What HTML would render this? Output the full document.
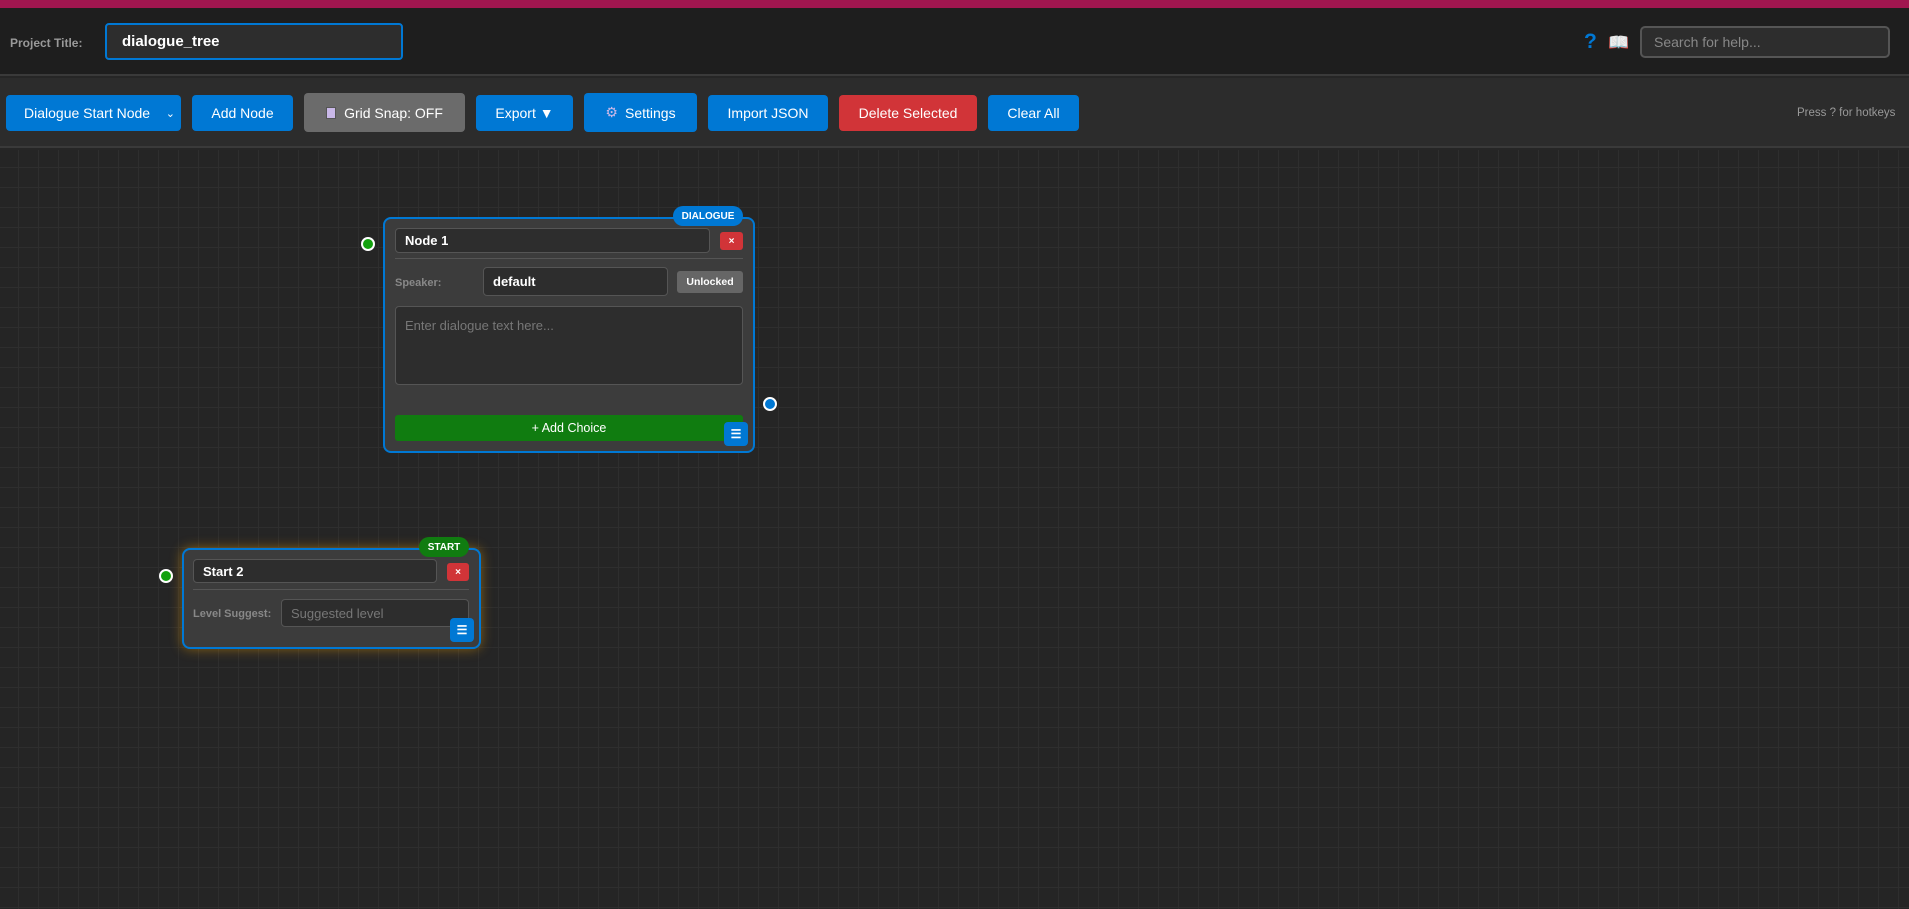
<!DOCTYPE html>
<html><head><meta charset="utf-8"><style>
*{box-sizing:border-box;margin:0;padding:0}
body{width:1909px;height:909px;overflow:hidden;background:#262626;font-family:"Liberation Sans",Arial,sans-serif;position:relative}
.a{position:absolute}
#pink{left:0;top:0;width:1909px;height:8px;background:#a0164f}
#hdr{left:0;top:8px;width:1909px;height:68px;background:#1e1e1e;border-bottom:2px solid #3a3a3a}
#tb{left:0;top:78px;width:1909px;height:70px;background:#2c2c2c;border-bottom:2px solid #3a3a3a}
#canvas{left:0;top:150px;width:1909px;height:759px;background-color:#252525;background-image:linear-gradient(#2e2e2e 1px,transparent 1px),linear-gradient(90deg,#2e2e2e 1px,transparent 1px);background-size:20px 20px;background-position:-2px -3px}
.btn{position:absolute;top:95px;height:36px;background:#0078d4;color:#fff;font-size:14px;border-radius:4px;display:flex;align-items:center;justify-content:center}
.node{position:absolute;background:#3c3c3c;border:2px solid #0078d4;border-radius:8px}
.inp{position:absolute;background:#2d2d2d;border:1px solid #555;border-radius:4px;color:#fff;font-size:13px;display:flex;align-items:center;padding-left:9px}
.badge{position:absolute;height:20px;border-radius:10px;color:#fff;font-size:10px;font-weight:bold;display:flex;align-items:center;justify-content:center}
.x{position:absolute;background:#d13438;border-radius:3px;color:#fff;font-size:10px;font-weight:bold;display:flex;align-items:center;justify-content:center}
.menu{position:absolute;width:24px;height:24px;background:#0078d4;border-radius:4px;color:#fff;font-size:12px;font-weight:bold;display:flex;align-items:center;justify-content:center}
.lbl{position:absolute;color:#888;font-size:11px;font-weight:bold}
.dot{position:absolute;width:14px;height:14px;border-radius:50%;border:2px solid #fff}
</style></head><body>
<div class="a" id="pink"></div>
<div class="a" id="hdr"></div>
<div class="a" style="left:10px;top:36px;color:#999;font-size:12px;font-weight:bold">Project Title:</div>
<div class="a" style="left:105px;top:23px;width:298px;height:37px;background:#2d2d2d;border:2px solid #0078d4;border-radius:4px;color:#fff;font-weight:bold;font-size:15px;padding:8px 0 0 15px">dialogue_tree</div>
<div class="a" style="left:1584px;top:30px;color:#0078d4;font-size:21px;font-weight:bold">?</div>
<div class="a" style="left:1608px;top:33px;font-size:17px">📖</div>
<div class="a" style="left:1640px;top:26px;width:250px;height:32px;background:#2d2d2d;border:2px solid #555;border-radius:5px;color:#888;font-size:14px;padding:6px 0 0 12px">Search for help...</div>
<div class="a" id="tb"></div>
<div class="btn" style="left:6px;width:175px;justify-content:flex-start;padding-left:18px">Dialogue Start Node<span style="position:absolute;right:6px;font-size:11px">⌄</span></div>
<div class="btn" style="left:192px;width:101px">Add Node</div>
<div class="btn" style="left:304px;width:161px;top:93px;height:39px;background:#6b6b6b"><span style="display:inline-block;width:10px;height:12px;background:#c9b8e8;border:1px solid #555;margin-right:8px"></span>Grid Snap: OFF</div>
<div class="btn" style="left:476px;width:97px">Export ▼</div>
<div class="btn" style="left:584px;width:113px;top:93px;height:39px"><span style="color:#c9b8e8;margin-right:7px">⚙</span>Settings</div>
<div class="btn" style="left:708px;width:120px">Import JSON</div>
<div class="btn" style="left:839px;width:138px;background:#d13438">Delete Selected</div>
<div class="btn" style="left:988px;width:91px">Clear All</div>
<div class="a" style="left:1797px;top:107px;color:#999;font-size:11.5px">Press ? for hotkeys</div>
<div class="a" id="canvas"></div>

<div class="dot" style="left:361px;top:237px;background:#13a10e"></div>
<div class="dot" style="left:763px;top:397px;background:#0078d4"></div>
<div class="node" style="left:383px;top:217px;width:372px;height:236px"></div>
<div class="badge" style="left:673px;top:206px;width:70px;background:#0078d4">DIALOGUE</div>
<div class="inp" style="left:395px;top:228px;width:315px;height:25px;font-weight:bold">Node 1</div>
<div class="x" style="left:720px;top:232px;width:23px;height:18px">×</div>
<div class="a" style="left:395px;top:258px;width:348px;height:1px;background:#555"></div>
<div class="lbl" style="left:395px;top:277px">Speaker:</div>
<div class="inp" style="left:483px;top:267px;width:185px;height:29px;font-weight:bold;font-size:13px">default</div>
<div class="a" style="left:677px;top:271px;width:66px;height:22px;background:#666;border-radius:3px;color:#fff;font-size:10.5px;font-weight:bold;display:flex;align-items:center;justify-content:center">Unlocked</div>
<div class="inp" style="left:395px;top:306px;width:348px;height:79px;align-items:flex-start;padding-top:11px;color:#777;font-size:13px">Enter dialogue text here...</div>
<div class="a" style="left:395px;top:415px;width:348px;height:26px;background:#107c10;border-radius:3px;color:#fff;font-size:12.5px;display:flex;align-items:center;justify-content:center">+ Add Choice</div>
<div class="menu" style="left:724px;top:422px">☰</div>

<div class="dot" style="left:159px;top:569px;background:#13a10e"></div>
<div class="node" style="left:182px;top:548px;width:299px;height:101px;box-shadow:0 0 12px rgba(255,170,0,.45)"></div>
<div class="badge" style="left:419px;top:537px;width:50px;background:#107c10">START</div>
<div class="inp" style="left:193px;top:559px;width:244px;height:24px;font-weight:bold">Start 2</div>
<div class="x" style="left:447px;top:563px;width:22px;height:18px">×</div>
<div class="a" style="left:193px;top:589px;width:276px;height:1px;background:#555"></div>
<div class="lbl" style="left:193px;top:608px">Level Suggest:</div>
<div class="inp" style="left:281px;top:599px;width:188px;height:28px;color:#777;font-size:13px">Suggested level</div>
<div class="menu" style="left:450px;top:618px">☰</div>
</body></html>
